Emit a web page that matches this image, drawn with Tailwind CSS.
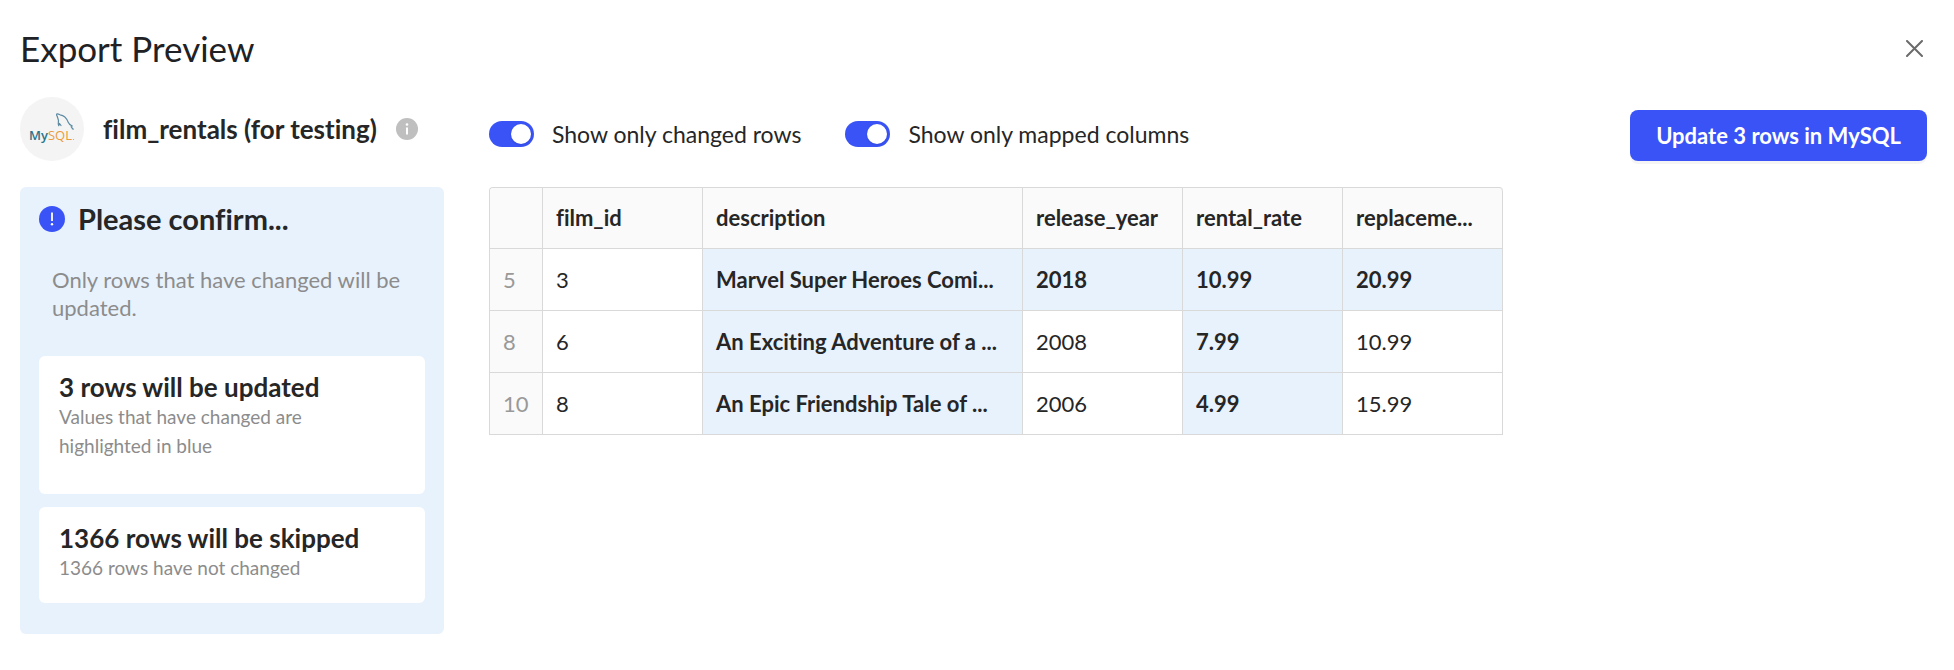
<!DOCTYPE html>
<html lang="en">

<head>
    <meta charset="UTF-8">
    <meta name="viewport" content="width=device-width, initial-scale=1.0">
    <title>Export Preview</title>
    <script src="https://cdn.jsdelivr.net/npm/@tailwindcss/browser@4"></script>
</head>

<body class="bg-white font-['Lato',sans-serif] text-[22px] leading-7 text-[#262626] [font-variant-ligatures:none]">
    <div class="pl-5 pr-[27px] pt-6 pb-9">
        <header class="flex items-center justify-between mb-[25px]">
            <h1 class="text-[35px] leading-[48px] text-[#202124]">Export Preview</h1>
            <button type="button" aria-label="Close" class="p-1 text-[#6b6b6b]">
                <svg class="size-[17px]" viewBox="0 0 17 17" fill="none" stroke="currentColor" stroke-width="2" stroke-linecap="round">
                    <path d="M1 1l15 15M16 1L1 16" />
                </svg>
            </button>
        </header>

        <div class="flex items-start gap-[45px]">
            <!-- Destination and summary -->
            <aside class="w-[424px] shrink-0">
                <div class="flex items-center h-16 mb-[26px]">
                    <div class="size-16 rounded-full bg-[#f4f4f4]">
                        <svg class="size-16" viewBox="0 0 64 64" role="img" aria-label="MySQL logo">
                            <path fill="none" stroke="#5d8ba3" stroke-width="1.2" stroke-linejoin="round" stroke-linecap="round" d="M41 28.500l-1.500-2-.8 2.200c-1-1.500-.2-3.800-.2-5.200l-1.300-4.200c-.9-1.200-.9-2.600.3-2.500 1.200.1 1.900.7 2.600 1 3.500.4 6.600 3.500 8.100 7.400.7 2 1.700 2.500 4.100 3.800-1 .4-1.300.5-1 1.100l2 2-1.100-.4" />
                            <text x="9" y="43" font-family="Open Sans, sans-serif" font-size="13" font-weight="600" fill="#2d7289">My<tspan font-weight="400" fill="#ec9a3c">SQL</tspan></text>
                            <circle cx="53.500" cy="42.500" r=".6" fill="#ec9a3c" />
                        </svg>
                    </div>
                    <h2 class="ml-[19px] text-[26px] leading-8 font-bold whitespace-nowrap">film_rentals (for testing)</h2>
                    <button type="button" aria-label="About this destination" class="ml-[19px] shrink-0">
                        <svg class="size-[22px]" viewBox="0 0 22 22">
                            <circle cx="11" cy="11" r="11" fill="#bfbfbf" />
                            <circle cx="11" cy="6.500" r="1.300" fill="#fff" />
                            <path d="M11 9.500v7" stroke="#fff" stroke-width="2" />
                        </svg>
                    </button>
                </div>

                <section class="rounded-md bg-[#e8f2fd] pt-4 px-[19px] pb-[31px]">
                    <div class="flex items-center gap-[13px]">
                        <svg class="size-[26px]" viewBox="0 0 26 26" aria-hidden="true">
                            <circle cx="13" cy="13" r="13" fill="#3953f7" />
                            <path d="M13 6.500v8.500" stroke="#fff" stroke-width="1.800" />
                            <circle cx="13" cy="18.300" r="1.200" fill="#fff" />
                        </svg>
                        <h3 class="text-[29px] leading-8 font-bold">Please confirm...</h3>
                    </div>
                    <p class="mt-[31px] mb-[34px] pl-[13px] text-[#8c8c8c]">Only rows that have changed will be updated.</p>
                    <div class="rounded-md bg-white pt-4 px-5 pb-[34px] mb-[13px]">
                        <h4 class="text-[26px] leading-[30px] font-bold">3 rows will be updated</h4>
                        <p class="pr-10 text-[19px] leading-[29px] text-[#8c8c8c]">Values that have changed are highlighted in blue</p>
                    </div>
                    <div class="rounded-md bg-white pt-4 px-5 pb-[21px]">
                        <h4 class="text-[26px] leading-[30px] font-bold">1366 rows will be skipped</h4>
                        <p class="text-[19px] leading-[29px] text-[#8c8c8c]">1366 rows have not changed</p>
                    </div>
                </section>
            </aside>

            <!-- Preview table -->
            <main class="flex-1 min-w-0 pt-[13px]">
                <div class="flex items-center justify-between mb-[26px]">
                    <div class="flex items-center gap-11 pb-[3px] text-[23px]">
                        <label class="flex items-center gap-[18px]">
                            <input type="checkbox" role="switch" checked class="appearance-none flex items-center w-[45px] h-[26px] p-[3px] rounded-full bg-[#bfbfbf] checked:bg-[#3953f7] checked:justify-end before:size-5 before:rounded-full before:bg-white before:shadow-sm">
                            <span>Show only changed rows</span>
                        </label>
                        <label class="flex items-center gap-[18px]">
                            <input type="checkbox" role="switch" checked class="appearance-none flex items-center w-[45px] h-[26px] p-[3px] rounded-full bg-[#bfbfbf] checked:bg-[#3953f7] checked:justify-end before:size-5 before:rounded-full before:bg-white before:shadow-sm">
                            <span>Show only mapped columns</span>
                        </label>
                    </div>
                    <button type="button" class="h-[51px] px-[26px] rounded-lg bg-[#3953f7] font-bold text-white shadow-[0_3px_0_rgba(0,0,0,0.04)]">Update 3 rows in MySQL</button>
                </div>

                <table class="table-fixed w-[1014px] border-separate border-spacing-0 border-t border-l border-[#d9d9d9] rounded-t text-left [&_thead_th]:h-[61px] [&_td]:h-[62px] [&_th]:px-[13px] [&_td]:px-[13px] [&_th]:border-r [&_th]:border-b [&_td]:border-r [&_td]:border-b [&_th]:border-[#d9d9d9] [&_td]:border-[#d9d9d9] [&_th]:whitespace-nowrap [&_td]:whitespace-nowrap">
                    <colgroup>
                        <col class="w-[53px]">
                        <col class="w-[160px]">
                        <col class="w-[320px]">
                        <col class="w-[160px]">
                        <col class="w-[160px]">
                        <col class="w-[160px]">
                    </colgroup>
                    <thead>
                        <tr class="[&_th]:bg-[#fafafa]">
                            <th class="rounded-tl"></th>
                            <th>film_id</th>
                            <th>description</th>
                            <th>release_year</th>
                            <th>rental_rate</th>
                            <th class="rounded-tr">replaceme...</th>
                        </tr>
                    </thead>
                    <tbody>
                        <tr>
                            <th class="bg-[#fafafa] font-normal text-[#999999]">5</th>
                            <td>3</td>
                            <td class="bg-[#e8f2fd] font-bold">Marvel Super Heroes Comi...</td>
                            <td class="bg-[#e8f2fd] font-bold">2018</td>
                            <td class="bg-[#e8f2fd] font-bold">10.99</td>
                            <td class="bg-[#e8f2fd] font-bold">20.99</td>
                        </tr>
                        <tr>
                            <th class="bg-[#fafafa] font-normal text-[#999999]">8</th>
                            <td>6</td>
                            <td class="bg-[#e8f2fd] font-bold">An Exciting Adventure of a ...</td>
                            <td>2008</td>
                            <td class="bg-[#e8f2fd] font-bold">7.99</td>
                            <td>10.99</td>
                        </tr>
                        <tr>
                            <th class="bg-[#fafafa] font-normal text-[#999999]">10</th>
                            <td>8</td>
                            <td class="bg-[#e8f2fd] font-bold">An Epic Friendship Tale of ...</td>
                            <td>2006</td>
                            <td class="bg-[#e8f2fd] font-bold">4.99</td>
                            <td>15.99</td>
                        </tr>
                    </tbody>
                </table>
            </main>
        </div>
    </div>
</body>

</html>
